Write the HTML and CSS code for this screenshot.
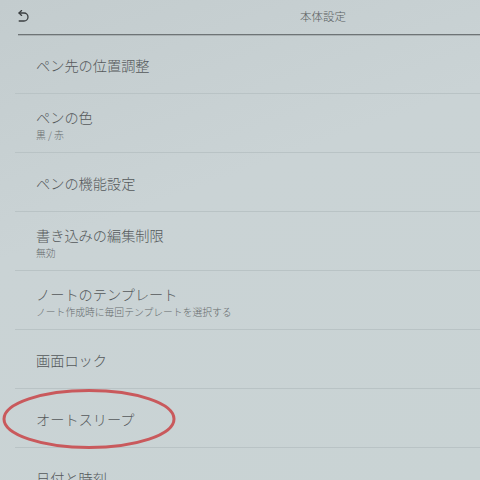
FILE: index.html
```html
<!DOCTYPE html>
<html lang="ja">
<head>
<meta charset="utf-8">
<link rel="stylesheet" href="styles.css">
</head>
<body>
<div class="screen">
  <header class="topbar">
    <svg class="back" viewBox="0 0 12 12" width="12" height="12">
      <path d="M4.6 0.6 L2 3 L4.6 5.4" fill="none" stroke="#3b3f41" stroke-width="1.3" stroke-linecap="round" stroke-linejoin="round"/>
      <path d="M2.2 3 H7 A4 4 0 0 1 7 11 H2.2" fill="none" stroke="#3b3f41" stroke-width="1.3" stroke-linecap="round"/>
    </svg>
    <div class="title">本体設定</div>
  </header>
  <div class="rule"></div>
  <ul class="list">
    <li class="row"><span class="label">ペン先の位置調整</span></li>
    <li class="row"><span class="label">ペンの色</span><span class="sub">黒 / 赤</span></li>
    <li class="row"><span class="label">ペンの機能設定</span></li>
    <li class="row"><span class="label">書き込みの編集制限</span><span class="sub">無効</span></li>
    <li class="row"><span class="label">ノートのテンプレート</span><span class="sub">ノート作成時に毎回テンプレートを選択する</span></li>
    <li class="row"><span class="label">画面ロック</span></li>
    <li class="row"><span class="label">オートスリープ</span></li>
    <li class="row"><span class="label">日付と時刻</span></li>
  </ul>
  <svg class="circle" viewBox="0 0 176 62" width="176" height="62">
    <ellipse cx="88" cy="31" rx="85" ry="28.5" fill="none" stroke="#c9595c" stroke-width="3"/>
  </svg>
</div>
</body>
</html>
```
FILE: styles.css
```css
html, body {
  margin: 0;
  padding: 0;
}
body {
  width: 480px;
  height: 480px;
  overflow: hidden;
  background: #c9d2d4;
  font-family: "Noto Sans CJK JP", "Noto Sans", sans-serif;
  color: #5c6163;
}
.screen {
  position: relative;
  width: 480px;
  height: 480px;
  overflow: hidden;
  background: linear-gradient(160deg, #c3ccce 0%, #cad3d5 40%, #c9d3d4 100%);
}
.topbar {
  height: 34px;
  display: flex;
  align-items: center;
  padding-left: 17px;
  box-sizing: border-box;
}
.back {
  display: block;
  margin-top: -2px;
}
.title {
  margin-left: auto;
  margin-right: 134px;
  font-size: 11.5px;
  font-weight: 300;
  color: #5a5e60;
  margin-top: -2px;
}
.rule {
  height: 1px;
  margin-left: 18px;
  background: #6e7476;
  box-shadow: 0 0.5px 0 #8d9496;
}
.list {
  list-style: none;
  margin: 0 0 0 15px;
  padding: 0;
}
.row {
  border-bottom: 1px solid #b9c3c5;
  display: flex;
  flex-direction: column;
  justify-content: center;
  padding-left: 21px;
  padding-top: 2px;
  height: 56px;
}
.label {
  font-size: 14.2px;
  line-height: 18px;
  font-weight: 300;
  color: #55595b;
}
.sub {
  font-size: 9.8px;
  line-height: 12px;
  margin-top: 3px;
  font-weight: 300;
  color: #666b6d;
}
.circle {
  position: absolute;
  left: 1px;
  top: 388px;
}
```
